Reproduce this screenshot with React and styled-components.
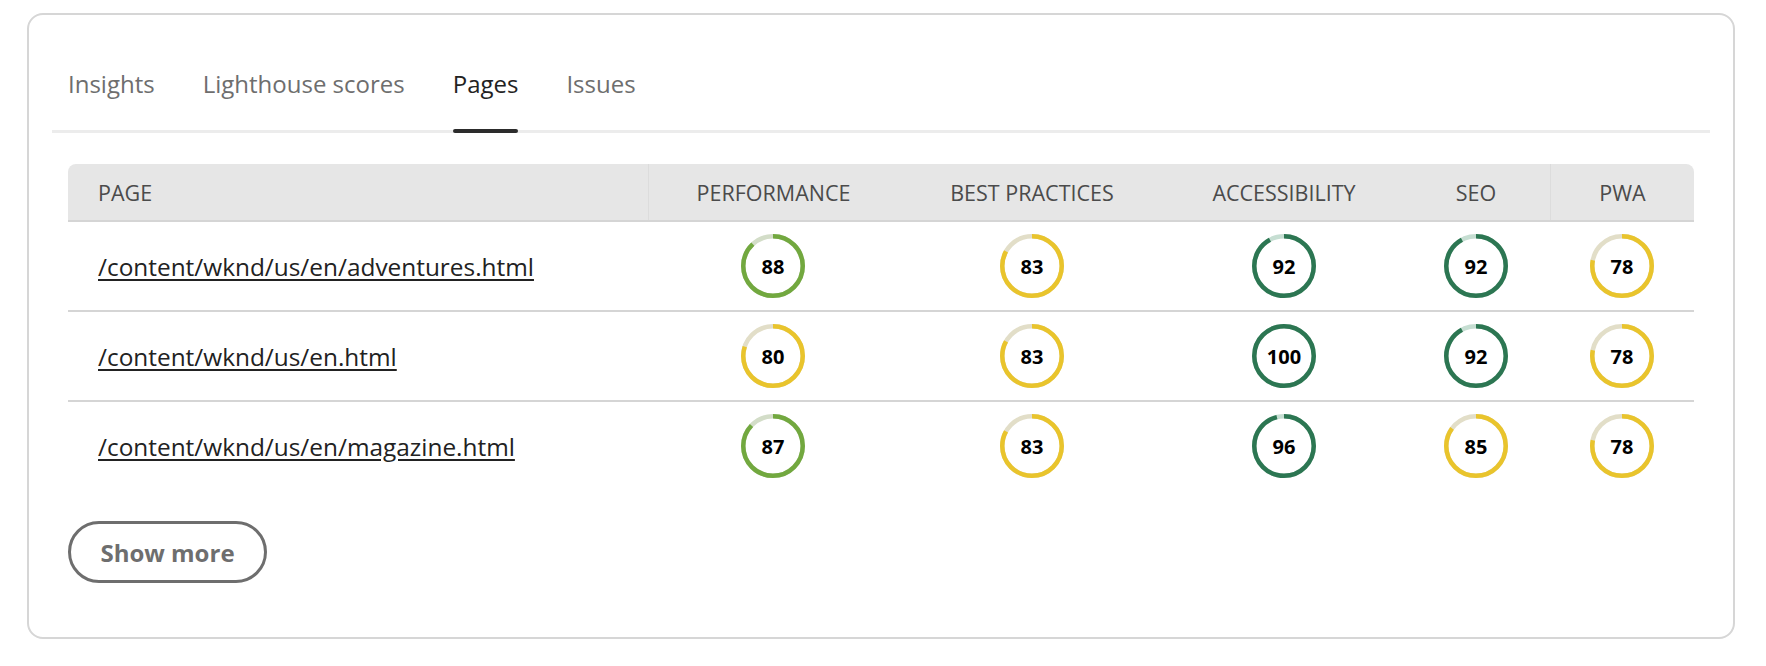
import React from 'react';
import styled, { createGlobalStyle } from 'styled-components';

const GlobalStyle = createGlobalStyle`
  body {
    margin: 0;
    background: #fff;
    font-family: "Open Sans", "Liberation Sans", sans-serif;
  }
`;

const COLUMNS = '580px 250px 268px 236px 148px 144px';

const TABS = ['Insights', 'Lighthouse scores', 'Pages', 'Issues'];

const HEADERS = [
  { label: 'PAGE', align: 'flex-start' },
  { label: 'PERFORMANCE', align: 'center', divider: true },
  { label: 'BEST PRACTICES', align: 'center' },
  { label: 'ACCESSIBILITY', align: 'center' },
  { label: 'SEO', align: 'center' },
  { label: 'PWA', align: 'center', divider: true },
];

const PAGES = [
  { path: '/content/wknd/us/en/adventures.html', scores: [88, 83, 92, 92, 78] },
  { path: '/content/wknd/us/en.html', scores: [80, 83, 100, 92, 78] },
  { path: '/content/wknd/us/en/magazine.html', scores: [87, 83, 96, 85, 78] },
];

const TONES = {
  good: { arc: '#2c7652', track: '#c6ded2' },
  fair: { arc: '#72a83f', track: '#d3ddc8' },
  average: { arc: '#e9c42c', track: '#e2dec8' },
};

const toneFor = (score) => (score >= 90 ? 'good' : score >= 86 ? 'fair' : 'average');

const Gauge = ({ value }) => {
  const tone = TONES[toneFor(value)];
  const r = 29.75;
  const c = 2 * Math.PI * r;
  return (
    <Ring>
      <svg width="64" height="64" viewBox="0 0 64 64">
        <circle cx="32" cy="32" r={r} fill="none" stroke={tone.track} strokeWidth="4.5" />
        <circle
          cx="32"
          cy="32"
          r={r}
          fill="none"
          stroke={tone.arc}
          strokeWidth="4.5"
          strokeDasharray={`${(c * value) / 100} ${c}`}
          transform="rotate(-90 32 32)"
        />
      </svg>
      <Value>{value}</Value>
    </Ring>
  );
};

const App = () => {
  return (
    <>
      <GlobalStyle />
      <Card>
        <TabList>
          {TABS.map((t) => (
            <Tab key={t} $active={t === 'Pages'}>{t}</Tab>
          ))}
        </TabList>
        <Body>
          <Table>
            <HeaderRow>
              {HEADERS.map((h) => (
                <HeaderCell key={h.label} $align={h.align} $divider={h.divider}>
                  {h.label}
                </HeaderCell>
              ))}
            </HeaderRow>
            {PAGES.map((p) => (
              <Row key={p.path}>
                <PageCell>
                  <PageLink href="#">{p.path}</PageLink>
                </PageCell>
                {p.scores.map((s, i) => (
                  <ScoreCell key={i}>
                    <Gauge value={s} />
                  </ScoreCell>
                ))}
              </Row>
            ))}
          </Table>
          <ShowMore>Show more</ShowMore>
        </Body>
      </Card>
    </>
  );
};

const Card = styled.section`
  margin: 13px 31px 0 27px;
  border: 2px solid #d6d6d6;
  border-radius: 16px;
  padding: 0 23px 54px;
`;

const TabList = styled.div`
  display: flex;
  gap: 48px;
  margin-top: 53px;
  padding: 0 16px;
  border-bottom: 3px solid #ececec;
`;

const Tab = styled.div`
  position: relative;
  font-size: 24px;
  line-height: 32px;
  padding-bottom: 30px;
  color: ${(p) => (p.$active ? '#222' : '#6e6e6e')};

  &::after {
    content: '';
    display: ${(p) => (p.$active ? 'block' : 'none')};
    position: absolute;
    left: 0;
    right: 0;
    bottom: -3px;
    height: 4px;
    border-radius: 2px;
    background: #2c2c2c;
  }
`;

const Body = styled.div`
  padding: 0 16px;
`;

const Table = styled.div`
  margin-top: 31px;
`;

const HeaderRow = styled.div`
  display: grid;
  grid-template-columns: ${COLUMNS};
  height: 56px;
  background: #e6e6e6;
  border-bottom: 2px solid #d5d5d5;
  border-radius: 8px 8px 0 0;
`;

const HeaderCell = styled.div`
  display: flex;
  align-items: center;
  justify-content: ${(p) => p.$align};
  padding-left: ${(p) => (p.$align === 'flex-start' ? '30px' : '0')};
  border-left: ${(p) => (p.$divider ? '1px solid #dcdcdc' : 'none')};
  font-size: 21.5px;
  color: #4b4b4b;
  white-space: nowrap;
`;

const Row = styled.div`
  display: grid;
  grid-template-columns: ${COLUMNS};
  height: 88px;
  border-bottom: 2px solid #d5d5d5;

  &:last-child {
    border-bottom: none;
  }
`;

const PageCell = styled.div`
  display: flex;
  align-items: center;
  padding-left: 30px;
`;

const PageLink = styled.a`
  font-size: 24.4px;
  color: #222;
  text-decoration: underline;
  text-decoration-thickness: 2px;
  text-underline-offset: 3px;
`;

const ScoreCell = styled.div`
  display: flex;
  align-items: center;
  justify-content: center;
`;

const Ring = styled.div`
  display: grid;
  width: 64px;
  height: 64px;

  & > * {
    grid-area: 1 / 1;
  }
`;

const Value = styled.span`
  display: flex;
  align-items: center;
  justify-content: center;
  font-size: 20px;
  font-weight: 700;
  color: #000;
`;

const ShowMore = styled.button`
  margin-top: 31px;
  box-sizing: border-box;
  width: 199px;
  height: 62px;
  padding: 0;
  border: 3px solid #6e6e6e;
  border-radius: 31px;
  background: #fff;
  color: #6e6e6e;
  font-family: "Open Sans", "Liberation Sans", sans-serif;
  font-size: 24px;
  font-weight: 700;
`;

export default App;
